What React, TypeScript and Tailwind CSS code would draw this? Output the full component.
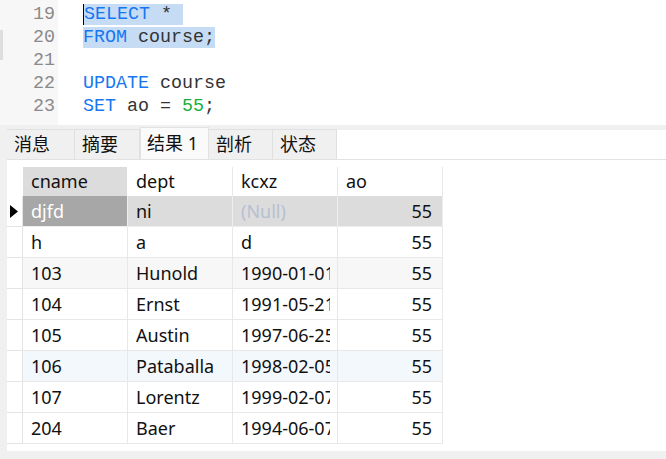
import React from "react";

const mono = { fontFamily: '"Liberation Mono", "DejaVu Sans Mono", monospace' };
const sans = { fontFamily: '"Noto Sans", "Noto Sans CJK SC", sans-serif' };

const tabs = [
  { label: "消息", w: "w-[68px]" },
  { label: "摘要", w: "w-[65px]" },
  { label: "结果 1", w: "w-[69px]", active: true },
  { label: "剖析", w: "w-[64px]" },
  { label: "状态", w: "w-[64px]" },
];

const rows = [
  ["djfd", "ni", null, "55"],
  ["h", "a", "d", "55"],
  ["103", "Hunold", "1990-01-01", "55"],
  ["104", "Ernst", "1991-05-21", "55"],
  ["105", "Austin", "1997-06-25", "55"],
  ["106", "Pataballa", "1998-02-05", "55"],
  ["107", "Lorentz", "1999-02-07", "55"],
  ["204", "Baer", "1994-06-07", "55"],
];

const Editor = () => (
  <div className="flex h-[125px] bg-white" style={mono}>
    <div className="relative w-[58px] bg-[#f7f7f7] pt-[3px] pr-[3px] text-right text-[18.33px] leading-[23px] text-[#8a8a8a]">
      <div className="absolute left-0 top-[30px] h-[30px] w-[3px] bg-[#dedede]" />
      {["19", "20", "21", "22", "23"].map((n) => (
        <div key={n}>{n}</div>
      ))}
    </div>
    <div className="pl-[25px] pt-[3px] text-[18.33px] leading-[23px] text-[#333] whitespace-pre">
      <div>
        <span className="bg-[#c6dcf5] border-l border-black text-[#1677f2]">
          SELECT<span className="text-[#333]"> * </span>
        </span>
      </div>
      <div>
        <span className="bg-[#c6dcf5]">
          <span className="text-[#1677f2]">FROM</span> course; 
        </span>
      </div>
      <div> </div>
      <div>
        <span className="text-[#1677f2]">UPDATE</span> course
      </div>
      <div>
        <span className="text-[#1677f2]">SET</span> ao = <span className="text-[#12b03c]">55</span>;
      </div>
    </div>
  </div>
);

const Tabs = () => (
  <div className="mt-[5px] flex h-[30px] items-end border-b border-[#e2e2e2] bg-white" style={sans}>
    {tabs.map((t) => (
      <div
        key={t.label}
        className={
          t.active
            ? `${t.w} -mt-[2px] flex h-[32px] items-center border border-b-0 border-[#e2e2e2] bg-[#fafafa] pl-[6px] text-[18px] text-[#111]`
            : `${t.w} flex h-[30px] items-center border border-b-0 border-l-0 border-[#e0e0e0] bg-[#f0f0f0] pl-[7px] text-[18px] text-[#111]`
        }
      >
        {t.label}
      </div>
    ))}
  </div>
);

const Grid = () => (
  <div className="flex-1 bg-white pt-[7px] text-[18px] text-[#111]" style={sans}>
    <div className="flex h-[29px]">
      <div className="w-[16px]" />
      {["cname", "dept", "kcxz", "ao"].map((h, i) => (
        <div
          key={h}
          className={`flex w-[105px] items-center border-r px-[8px] ${
            i === 0 ? "bg-[#dcdcdc] border-white" : "bg-white border-[#e8e8e8]"
          }`}
        >
          {h}
        </div>
      ))}
    </div>
    {rows.map((r, ri) => {
      const sel = ri === 0;
      const bg = sel ? "bg-[#dcdcdc]" : ri === 2 ? "bg-[#f7f7f7]" : ri === 5 ? "bg-[#f3f8fd]" : "bg-white";
      return (
        <div key={ri} className="flex h-[31px]">
          <div className="flex w-[16px] items-center border-b border-r border-[#e4e4e4] bg-white pl-[3px]">
            {sel && (
              <svg width="9" height="13" viewBox="0 0 9 13">
                <path d="M0 0 L8 6.5 L0 13 Z" fill="#000" />
              </svg>
            )}
          </div>
          {r.map((c, ci) => {
            const cellBg = sel && ci === 0 ? "bg-[#a7a7a7] text-white" : bg;
            const border = sel ? "border-[#eeeeee]" : "border-[#e8e8e8]";
            return (
              <div
                key={ci}
                className={`flex w-[105px] items-center overflow-hidden whitespace-nowrap border-b border-r pl-[8px] ${border} ${cellBg} ${
                  ci === 3 ? "justify-end pr-[10px]" : ""
                }`}
              >
                {c === null ? (
                  <span className="text-[#b7c0d2]">(Null)</span>
                ) : ci === 2 ? (
                  <span className="block w-[89px] shrink-0 overflow-hidden">{c}</span>
                ) : (
                  c
                )}
              </div>
            );
          })}
        </div>
      );
    })}
  </div>
);

export default function App() {
  return (
    <div className="flex h-[459px] w-[666px] flex-col overflow-hidden bg-[#f0f0f0]">
      <Editor />
      <div className="flex flex-1 flex-col pl-[7px] pb-[8px]">
        <Tabs />
        <Grid />
      </div>
    </div>
  );
}
